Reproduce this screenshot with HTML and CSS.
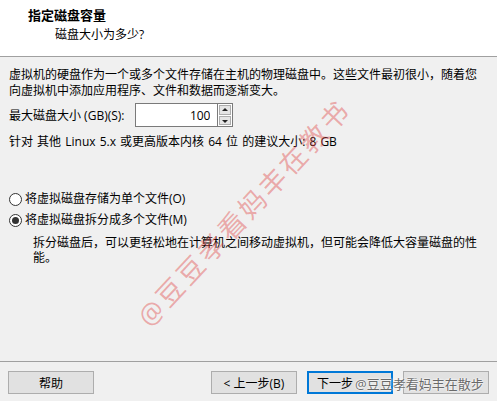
FILE: index.html
```html
<!DOCTYPE html>
<html lang="zh-CN">
<head>
    <meta charset="UTF-8">
    <meta name="viewport" content="width=device-width, initial-scale=1.0">
    <title>新建虚拟机向导</title>
    <link rel="stylesheet" href="styles.css">
</head>
<body>
    <div class="wizard">
        <div class="header">
            <div class="title">指定磁盘容量</div>
            <div class="subtitle">磁盘大小为多少?</div>
        </div>

        <div class="content">
            <p class="intro">虚拟机的硬盘作为一个或多个文件存储在主机的物理磁盘中。这些文件最初很小，随着您向虚拟机中添加应用程序、文件和数据而逐渐变大。</p>

            <div class="size-row">
                <label for="disk-size">最大磁盘大小 (GB)(S):</label>
                <div class="spin">
                    <input type="text" id="disk-size" value="100">
                    <div class="spin-buttons">
                        <span class="spin-up"></span>
                        <span class="spin-down"></span>
                    </div>
                </div>
            </div>

            <p class="hint">针对 其他 Linux 5.x 或更高版本内核 64 位 的建议大小: 8 GB</p>

            <div class="options">
                <label class="radio"><span class="dot"></span>将虚拟磁盘存储为单个文件(O)</label>
                <label class="radio checked"><span class="dot"></span>将虚拟磁盘拆分成多个文件(M)</label>
                <p class="note">拆分磁盘后，可以更轻松地在计算机之间移动虚拟机，但可能会降低大容量磁盘的性能。</p>
            </div>
        </div>

        <div class="footer">
            <button class="btn">帮助</button>
            <div class="nav">
                <button class="btn">&lt; 上一步(B)</button>
                <button class="btn focused">下一步</button>
                <button class="btn" aria-label="取消"></button>
            </div>
        </div>

        <!-- watermarks from the original capture -->
        <span class="mark-diag">@豆豆孝看妈丰在教书</span>
        <span class="mark-corner">@豆豆孝看妈丰在散步</span>
    </div>
</body>
</html>
```

FILE: styles.css
```css
* {
    box-sizing: border-box;
}
body {
    margin: 0;
    background-color: #f0f0f0;
    font-family: "Open Sans", "Noto Sans CJK SC", sans-serif;
    font-size: 12px;
    color: #000;
}
.wizard {
    position: relative;
    width: 497px;
    height: 401px;
    overflow: hidden;
    display: flex;
    flex-direction: column;
}
.header {
    height: 57px;
    background-color: #fff;
    border-bottom: 1px solid #a0a0a0;
    padding: 6px 0 0 28px;
}
.title {
    font-size: 13px;
    font-weight: bold;
    line-height: 18px;
}
.subtitle {
    margin: 2px 0 0 27px;
    line-height: 18px;
}
.content {
    flex: 1;
    padding: 10px 8px 0 9px;
}
p {
    margin: 0;
}
.intro {
    width: 472px;
    line-height: 16px;
}
.size-row {
    display: flex;
    align-items: center;
    gap: 11px;
    margin-top: 4px;
    height: 24px;
}
.spin {
    display: flex;
    height: 24px;
}
.spin input {
    width: 82px;
    height: 24px;
    border: 1px solid #7a7a7a;
    border-right: none;
    background: #fff;
    font: inherit;
    text-align: right;
    padding: 0 7px;
    outline: none;
}
.spin-buttons {
    width: 16px;
    display: flex;
    flex-direction: column;
    border: 1px solid #7a7a7a;
    background: #fff;
    padding: 1px;
    gap: 1px;
}
.spin-up, .spin-down {
    flex: 1;
    background: #e5e5e5;
    border: 1px solid #adadad;
    position: relative;
}
.spin-up::after, .spin-down::after {
    content: "";
    position: absolute;
    left: 2px;
    border-left: 3px solid transparent;
    border-right: 3px solid transparent;
}
.spin-up::after {
    top: 2px;
    border-bottom: 3px solid #222;
}
.spin-down::after {
    top: 3px;
    border-top: 3px solid #222;
}
.hint {
    margin-top: 7px;
    line-height: 16px;
    word-spacing: 1px;
}
.options {
    margin-top: 41px;
    display: flex;
    flex-direction: column;
    gap: 5px;
}
.radio {
    display: flex;
    align-items: center;
    gap: 3px;
    line-height: 16px;
}
.dot {
    width: 13px;
    height: 13px;
    border: 1px solid #333;
    border-radius: 50%;
    background: #fff;
    position: relative;
}
.checked .dot::after {
    content: "";
    position: absolute;
    left: 2px;
    top: 2px;
    width: 7px;
    height: 7px;
    border-radius: 50%;
    background: #333;
}
.note {
    margin: 2px 0 0 24px;
    width: 450px;
    line-height: 15px;
}
.footer {
    height: 40px;
    border-top: 1px solid #a0a0a0;
    display: flex;
    justify-content: space-between;
    padding: 9px 8px 0 8px;
}
.nav {
    display: flex;
    gap: 10px;
}
.btn {
    width: 86px;
    height: 23px;
    border: 1px solid #adadad;
    background-color: #e1e1e1;
    font: inherit;
    color: #000;
    padding: 0;
}
.btn.focused {
    border: 2px solid #0078d7;
    text-align: left;
    padding-left: 8px;
}
.mark-diag {
    position: absolute;
    left: 243px;
    top: 212px;
    transform: translate(-50%, -50%) rotate(-47deg);
    white-space: nowrap;
    font-size: 27px;
    letter-spacing: 3px;
    color: rgba(225, 70, 70, 0.42);
}
.mark-corner {
    position: absolute;
    left: 355px;
    top: 374px;
    white-space: nowrap;
    font-size: 13px;
    color: #6a6a6a;
    text-shadow: 0 0 2px #fff, 0 0 2px #fff;
}
```
